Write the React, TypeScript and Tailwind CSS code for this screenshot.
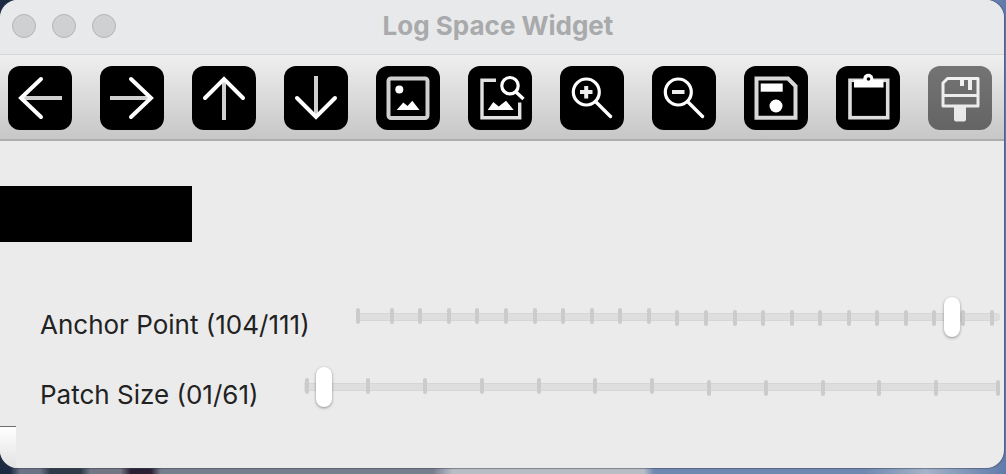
import { useState, type ReactNode } from 'react';

type Tool = { label: string; drawing: ReactNode; disabled?: boolean };

const SOFT = '#cfcfcf';

const tools: Tool[] = [
  {
    label: 'Left',
    drawing: (
      <>
        <path d="M14 32H54" stroke={SOFT} />
        <path d="M33 13L13 32L33 51" strokeLinecap="round" />
      </>
    ),
  },
  {
    label: 'Right',
    drawing: (
      <>
        <path d="M10 32H50" stroke={SOFT} />
        <path d="M31 13L51 32L31 51" strokeLinecap="round" />
      </>
    ),
  },
  {
    label: 'Up',
    drawing: (
      <>
        <path d="M32 14V54" stroke={SOFT} />
        <path d="M13 32L32 13L51 32" strokeLinecap="round" />
      </>
    ),
  },
  {
    label: 'Down',
    drawing: (
      <>
        <path d="M32 10V50" stroke={SOFT} />
        <path d="M13 32L32 51L51 32" strokeLinecap="round" />
      </>
    ),
  },
  {
    label: 'Full image',
    drawing: (
      <>
        <rect x="12.5" y="12.5" width="39" height="39.5" rx="2.5" stroke={SOFT} />
        <circle cx="23.3" cy="23.5" r="4" fill="white" stroke="none" />
        <path d="M20.7 44L27.3 36.5L31.5 40L36.3 34.7L43.5 44Z" fill="white" stroke="none" />
      </>
    ),
  },
  {
    label: 'Zoom to selection',
    drawing: (
      <>
        <path d="M28 14.3H14V51.7H51.7V36.5" strokeWidth="3.4" stroke="#e2e2e2" />
        <path d="M19.7 44L25.3 36L30.7 40.5L38 34.7L45.7 44Z" fill="white" stroke="none" />
        <circle cx="42" cy="19.7" r="8.2" strokeWidth="3.2" />
        <path d="M48 26L55.5 33" strokeWidth="3.4" />
      </>
    ),
  },
  {
    label: 'Zoom in',
    drawing: (
      <>
        <circle cx="26.3" cy="26" r="13" strokeWidth="3.2" />
        <path d="M35.5 35.5L50.5 50.5" strokeLinecap="round" strokeWidth="3.4" />
        <path d="M20 26H32.5M26.2 20V32.5" stroke="#ededed" />
      </>
    ),
  },
  {
    label: 'Zoom out',
    drawing: (
      <>
        <circle cx="26.3" cy="26" r="13" strokeWidth="3.2" />
        <path d="M35.5 35.5L50.5 50.5" strokeLinecap="round" strokeWidth="3.4" />
        <path d="M20 26H32.5" stroke="#ededed" />
      </>
    ),
  },
  {
    label: 'Save',
    drawing: (
      <>
        <path d="M12.5 12.5H44L51.5 20V51.7H12.5Z" stroke="#d8d8d8" />
        <rect x="16.7" y="17.5" width="22" height="8.2" fill="white" stroke="none" />
        <circle cx="32" cy="40" r="6.5" fill="white" stroke="none" />
      </>
    ),
  },
  {
    label: 'Copy to clipboard',
    drawing: (
      <>
        <rect x="14" y="14.3" width="37.7" height="37.4" stroke="#dddddd" strokeWidth="3.6" />
        <path d="M18 14H47.5V21.5H18Z" fill="white" stroke="none" />
        <circle cx="32.3" cy="12.8" r="5" fill="white" stroke="none" />
        <circle cx="32.5" cy="13" r="1.8" fill="black" stroke="none" />
      </>
    ),
  },
  {
    label: 'Clean',
    disabled: true,
    drawing: (
      <>
        <path d="M15 40V17L19.5 12.5H50V40Z" strokeWidth="3" strokeLinejoin="round" />
        <path d="M15 29.5H50" strokeWidth="3" />
        <path d="M34 12V20M42 12V24" />
        <path d="M26 40H38V53.5Q38 55.5 36 55.5H28Q26 55.5 26 53.5Z" fill="white" stroke="none" />
      </>
    ),
  },
];

function ToolButton({ label, drawing, disabled }: Tool) {
  return (
    <button
      type="button"
      aria-label={label}
      disabled={disabled}
      className="size-16 shrink-0 rounded-xl bg-black disabled:opacity-50"
    >
      <svg viewBox="0 0 64 64" className="size-full" fill="none" stroke="white" strokeWidth="4" aria-hidden="true">
        {drawing}
      </svg>
    </button>
  );
}

// Tick positions are percentages of the track's width.
function tickPositions(first: number, from: number, to: number, count: number): number[] {
  const inner = Array.from({ length: count }, (_, i) => from + ((to - from) * i) / (count - 1));
  return [first, ...inner];
}

const anchorTicks = tickPositions(0.3, 5.6, 98.7, 22);
const patchTicks = [...tickPositions(0.3, 9.2, 90.8, 11), 99.7];

type SliderProps = {
  id: string;
  name: string;
  start: number;
  max: number;
  ticks: number[];
  raised: number;
};

function SliderRow({ id, name, start, max, ticks, raised }: SliderProps) {
  const [value, setValue] = useState(start);
  const shown = String(value).padStart(2, '0');
  return (
    <div className="flex items-start gap-[46px] pr-1 pl-10">
      <label htmlFor={id} className="mt-2 text-[26px] leading-10 whitespace-nowrap text-[#222222]">
        {name} ({shown}/{max})
      </label>
      <div className="relative flex h-10 min-w-0 flex-1 items-center">
        <div className="h-2 w-full rounded-r-full border-y border-[#d6d6d6] bg-[#dedede]" />
        {ticks.map((left, i) => (
          <span
            key={left}
            className={`absolute h-4 w-1 -translate-x-1/2 rounded-full bg-[#cbcbcc] ${
              i < raised ? 'top-[11px]' : 'top-[13px]'
            }`}
            style={{ left: `${left}%` }}
          />
        ))}
        <input
          id={id}
          type="range"
          min={0}
          max={max}
          value={value}
          onChange={(e) => setValue(Number(e.target.value))}
          className="absolute inset-0 m-0 h-10 w-full appearance-none bg-transparent [&::-webkit-slider-thumb]:h-10 [&::-webkit-slider-thumb]:w-4 [&::-webkit-slider-thumb]:appearance-none [&::-webkit-slider-thumb]:rounded-full [&::-webkit-slider-thumb]:bg-white [&::-webkit-slider-thumb]:shadow-[0_1px_3px_rgba(0,0,0,0.4)]"
        />
      </div>
    </div>
  );
}

export default function App() {
  return (
    <div className="flex min-h-screen flex-col bg-[linear-gradient(90deg,#1d2b42_0%,#1d2b42_1%,#6c7384_2%,#6c7384_4%,#2f3a49_5%,#2f3a49_8%,#737683_9%,#737683_12%,#2b2033_13%,#2b2033_15%,#777e8e_16%,#777e8e_43%,#b9bdc6_45%,#b9bdc6_64%,#7089b0_65%,#7089b0_86%,#a6b3c8_92%,#5f7aab_100%)] pr-0.5 pb-1.5 font-['Inter','Liberation_Sans',sans-serif]">
      <main className="flex flex-1 flex-col overflow-hidden rounded-[18px] bg-[#ebebeb] shadow-[0_0_1px_1px_rgba(60,70,90,0.5)]">
        <header className="grid h-[54px] grid-cols-[1fr_auto_1fr] items-center bg-[#e8e9eb] pr-5 pb-0.5 pl-3">
          <div className="flex gap-4">
            {['Close', 'Minimize', 'Zoom'].map((label) => (
              <button
                key={label}
                type="button"
                aria-label={label}
                className="size-6 rounded-full border border-[#b3b4b5] bg-[#cfd0d1]"
              />
            ))}
          </div>
          <h1 className="text-[26px] leading-8 font-bold text-[#a9aaac]">Log Space Widget</h1>
        </header>

        <div
          role="toolbar"
          aria-label="View tools"
          className="flex justify-between border-t border-b-2 border-t-[#d6d6d6] border-b-[#adadad] bg-linear-to-b from-[#efefef] to-[#c7c7c7] pt-[11px] pr-3 pb-[9px] pl-2"
        >
          {tools.map((tool) => (
            <ToolButton key={tool.label} {...tool} />
          ))}
        </div>

        <div className="mt-[45px] h-14 w-48 bg-black" />

        <div className="mt-[55px] flex flex-col gap-[22px]">
          <SliderRow id="anchor-point" name="Anchor Point" start={104} max={111} ticks={anchorTicks} raised={11} />
          <SliderRow id="patch-size" name="Patch Size" start={1} max={61} ticks={patchTicks} raised={7} />
        </div>

        <div className="mt-auto h-[42px] w-4 border-t border-[#6d6d6d] bg-linear-to-b from-white to-[#e2e2e2]" />
      </main>
    </div>
  );
}
